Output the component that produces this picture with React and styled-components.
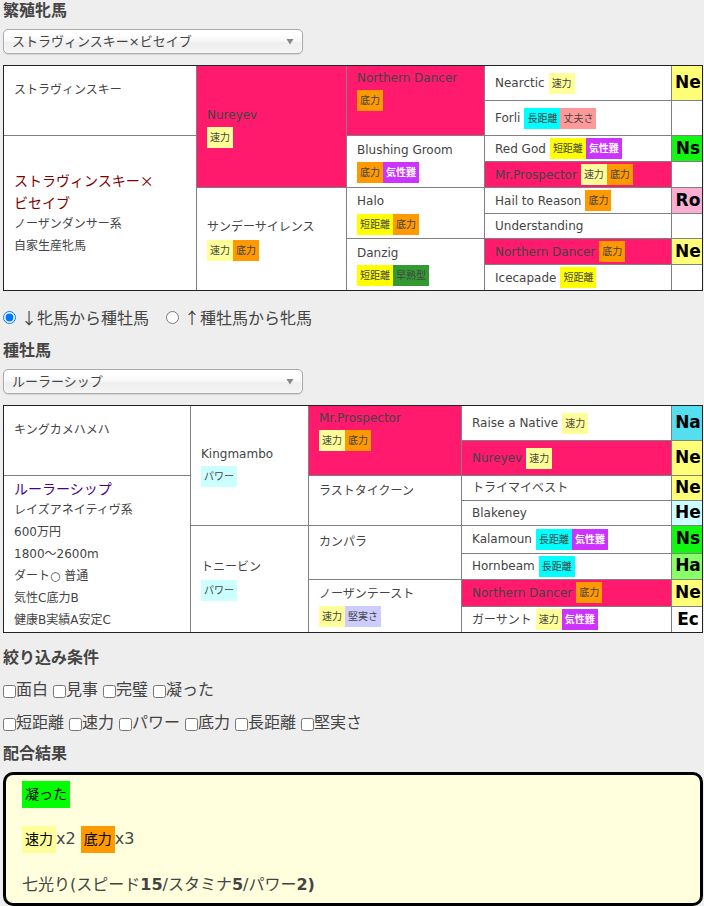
import React, { useState } from 'react';
import styled, { createGlobalStyle, css } from 'styled-components';

const GlobalStyle = createGlobalStyle`
  *, *::before, *::after {
    box-sizing: border-box;
  }
  body {
    margin: 0;
    background-color: #eee;
    color: #444;
    font-family: "DejaVu Sans", "Noto Sans CJK JP", sans-serif;
    font-size: 16px;
    line-height: 22px;
  }
`;

const Page = styled.main`
  padding: 0 1px 0 3px;
`;

const Heading = styled.h2`
  margin: 0 0 8px;
  font-size: 16px;
  font-weight: bold;
  line-height: 21px;
`;

const SelectBox = styled.div`
  position: relative;
  max-width: 300px;
  margin-bottom: 11px;
`;

const Select = styled.select`
  display: block;
  width: 100%;
  height: 25px;
  padding: 0 24px 0 8px;
  border: 1px solid #aaa;
  border-radius: 5px;
  background: linear-gradient(#fff 20%, #f6f6f6 50%, #eee 52%, #f4f4f4 100%);
  box-shadow: 0 0 3px #fff inset, 0 1px 1px rgba(0, 0, 0, 0.1);
  color: #444;
  font-family: inherit;
  font-size: 13px;
  appearance: none;
`;

const SelectArrow = styled.svg`
  position: absolute;
  top: 10px;
  right: 9px;
  pointer-events: none;
`;

const Table = styled.table`
  width: 100%;
  table-layout: fixed;
  border: 1px solid #222;
  border-collapse: separate;
  border-spacing: 0;
  background-color: #fff;
  font-size: 12px;

  tr:first-child > td {
    border-top: none;
  }
`;

const Cell = styled.td`
  padding: 0 0 0 10px;
  border-top: 1px solid #808080;
  border-left: 1px solid #808080;
  background-color: ${(props) => (props.$cross ? '#ff1a6e' : '#fff')};
  vertical-align: middle;
`;

const OwnCell = styled(Cell)`
  padding: 1px 0 1px 10px;
  border-left: none;
`;

const AncestorCell = styled(Cell)`
  height: ${(props) => props.$height}px;
`;

const CodeCell = styled(Cell)`
  padding: 0 0 2px 2px;
  background-color: ${(props) => props.$color || '#fff'};
  color: #000;
  font-size: 17px;
  font-weight: bold;
  text-align: center;
`;

const Line = styled.div`
  min-height: 22px;
`;

const TagLine = styled.div`
  display: flex;
  align-items: center;
  height: ${(props) => (props.$empty ? 20 : 24)}px;
`;

const NameLine = styled.div`
  display: flex;
  align-items: center;
  gap: 4px;
`;

const HorseLink = styled.a`
  color: ${(props) => props.$color};
  font-family: "Noto Sans CJK JP", sans-serif;
  font-size: 14px;
  text-decoration: none;
`;

const Tags = styled.span`
  display: flex;
`;

const Tag = styled.span`
  padding: 0 3px;
  background-color: ${(props) => props.$color};
  font-size: 10px;
  line-height: 21px;
  ${(props) =>
    props.$light &&
    css`
      color: #fff;
      font-weight: bold;
    `}
`;

const ResultTag = styled(Tag)`
  display: inline-block;
  color: #000;
  font-size: 14px;
  line-height: 27px;
`;

const RadioGroup = styled.div`
  display: flex;
  gap: 17px;
  margin: 15px 0 12px;
  font-family: "Noto Sans CJK JP", sans-serif;
`;

const RadioLabel = styled.label`
  display: flex;
  align-items: center;
  gap: 5px;

  input {
    width: 13px;
    height: 13px;
    margin: 0;
  }
`;

const FilterHeading = styled(Heading)`
  margin: 14px 0 11px;
`;

const Filters = styled.div`
  display: flex;
  flex-direction: column;
  gap: 11px;
  margin-bottom: 9px;
`;

const CheckRow = styled.div`
  display: flex;
  gap: 5px;
`;

const CheckLabel = styled.label`
  display: flex;
  align-items: center;

  input {
    width: 13px;
    height: 13px;
    margin: 2px 0 0;
  }
`;

const Result = styled.section`
  display: flex;
  flex-direction: column;
  gap: 18px;
  padding: 6px 16px 5px;
  border: 3px solid #000;
  border-radius: 10px;
  background-color: #ffffdd;
`;

const ResultLine = styled.div`
  display: flex;
  align-items: center;
  gap: 5px;
  height: 27px;
`;

const TAG_COLORS = {
  速力: '#ffff99',
  底力: '#ff9900',
  長距離: '#00ffff',
  短距離: '#ffff00',
  丈夫さ: '#ff9999',
  気性難: '#cc33ff',
  早熟型: '#339933',
  パワー: '#ccffff',
  堅実さ: '#ccccff',
  凝った: '#00ff00',
};

const CODE_COLORS = {
  Ne: '#ffff77',
  Ns: '#11f711',
  Ro: '#f9aed2',
  Na: '#55ddf0',
  He: '#ccffff',
  Ha: '#88ff66',
};

const mare = {
  widths: [192, 150, 138, 187, 31],
  sire: 'ストラヴィンスキー',
  own: {
    name: ['ストラヴィンスキー×', 'ビセイブ'],
    color: '#800000',
    lines: ['ノーザンダンサー系', '自家生産牝馬'],
  },
  second: [
    { name: 'Nureyev', tags: ['速力'], cross: true },
    { name: 'サンデーサイレンス', tags: ['速力', '底力'] },
  ],
  third: [
    { name: 'Northern Dancer', tags: ['底力'], cross: true },
    { name: 'Blushing Groom', tags: ['底力', '気性難'] },
    { name: 'Halo', tags: ['短距離', '底力'] },
    { name: 'Danzig', tags: ['短距離', '早熟型'] },
  ],
  fourth: [
    { name: 'Nearctic', tags: ['速力'], code: 'Ne' },
    { name: 'Forli', tags: ['長距離', '丈夫さ'] },
    { name: 'Red God', tags: ['短距離', '気性難'], code: 'Ns' },
    { name: 'Mr.Prospector', tags: ['速力', '底力'], cross: true },
    { name: 'Hail to Reason', tags: ['底力'], code: 'Ro' },
    { name: 'Understanding', tags: [] },
    { name: 'Northern Dancer', tags: ['底力'], cross: true, code: 'Ne' },
    { name: 'Icecapade', tags: ['短距離'] },
  ],
};

const stallion = {
  widths: [186, 118, 153, 210, 31],
  sire: 'キングカメハメハ',
  own: {
    name: ['ルーラーシップ'],
    color: '#4b0082',
    lines: [
      'レイズアネイティヴ系',
      '600万円',
      '1800〜2600m',
      'ダート○ 普通',
      '気性C底力B',
      '健康B実績A安定C',
    ],
  },
  second: [
    { name: 'Kingmambo', tags: ['パワー'] },
    { name: 'トニービン', tags: ['パワー'] },
  ],
  third: [
    { name: 'Mr.Prospector', tags: ['速力', '底力'], cross: true },
    { name: 'ラストタイクーン', tags: [] },
    { name: 'カンパラ', tags: [] },
    { name: 'ノーザンテースト', tags: ['速力', '堅実さ'] },
  ],
  fourth: [
    { name: 'Raise a Native', tags: ['速力'], code: 'Na' },
    { name: 'Nureyev', tags: ['速力'], cross: true, code: 'Ne' },
    { name: 'トライマイベスト', tags: [], code: 'Ne' },
    { name: 'Blakeney', tags: [], code: 'He' },
    { name: 'Kalamoun', tags: ['長距離', '気性難'], code: 'Ns' },
    { name: 'Hornbeam', tags: ['長距離'], code: 'Ha' },
    { name: 'Northern Dancer', tags: ['底力'], cross: true, code: 'Ne' },
    { name: 'ガーサント', tags: ['速力', '気性難'], code: 'Ec' },
  ],
};

const TagList = ({ tags }) => (
  <Tags>
    {tags.map((tag) => (
      <Tag key={tag} $color={TAG_COLORS[tag]} $light={tag === '気性難'}>
        {tag}
      </Tag>
    ))}
  </Tags>
);

const rowHeight = (index, tags) => {
  if (index === 0) return 34;
  if (index === 1) return 35;
  return tags.length ? 26 : 25;
};

const Pedigree = ({ horse }) => {
  const { widths, sire, own, second, third, fourth } = horse;

  return (
    <Table>
      <colgroup>
        {widths.map((width, i) => (
          <col key={i} width={width} />
        ))}
      </colgroup>
      <tbody>
        {fourth.map((horse4, i) => {
          const horse2 = second[i / 4];
          const horse3 = third[i / 2];
          return (
            <tr key={horse4.name}>
              {i === 0 && (
                <OwnCell rowSpan={2}>
                  <Line>{sire}</Line>
                  <Line />
                </OwnCell>
              )}
              {i === 2 && (
                <OwnCell rowSpan={6}>
                  <HorseLink href="#horse" $color={own.color}>
                    {own.name.map((part) => (
                      <Line key={part}>{part}</Line>
                    ))}
                  </HorseLink>
                  {own.lines.map((line) => (
                    <Line key={line}>{line}</Line>
                  ))}
                </OwnCell>
              )}
              {horse2 && (
                <Cell rowSpan={4} $cross={horse2.cross}>
                  <Line>{horse2.name}</Line>
                  <TagLine>
                    <TagList tags={horse2.tags} />
                  </TagLine>
                </Cell>
              )}
              {horse3 && (
                <Cell rowSpan={2} $cross={horse3.cross}>
                  <Line>{horse3.name}</Line>
                  <TagLine $empty={!horse3.tags.length}>
                    <TagList tags={horse3.tags} />
                  </TagLine>
                  {i === 0 && <Line />}
                </Cell>
              )}
              <AncestorCell $cross={horse4.cross} $height={rowHeight(i, horse4.tags)}>
                <NameLine>
                  {horse4.name}
                  <TagList tags={horse4.tags} />
                </NameLine>
              </AncestorCell>
              <CodeCell $color={CODE_COLORS[horse4.code]}>{horse4.code}</CodeCell>
            </tr>
          );
        })}
      </tbody>
    </Table>
  );
};

const HorseSelect = ({ label, name }) => (
  <SelectBox>
    <Select aria-label={label} defaultValue={name}>
      <option value={name}>{name}</option>
    </Select>
    <SelectArrow width="8" height="6" viewBox="0 0 8 6" aria-hidden="true">
      <path d="M0.5 0h7L4 5.5z" fill="#888" />
    </SelectArrow>
  </SelectBox>
);

const FilterRow = ({ names }) => (
  <CheckRow>
    {names.map((name) => (
      <CheckLabel key={name}>
        <input type="checkbox" name={name} />
        {name}
      </CheckLabel>
    ))}
  </CheckRow>
);

const App = () => {
  const [direction, setDirection] = useState('mare');

  return (
    <Page lang="ja">
      <GlobalStyle />
      <Heading>繁殖牝馬</Heading>
      <HorseSelect label="繁殖牝馬" name="ストラヴィンスキー×ビセイブ" />
      <Pedigree horse={mare} />

      <RadioGroup>
        <RadioLabel>
          <input
            type="radio"
            name="direction"
            checked={direction === 'mare'}
            onChange={() => setDirection('mare')}
          />
          ↓牝馬から種牡馬
        </RadioLabel>
        <RadioLabel>
          <input
            type="radio"
            name="direction"
            checked={direction === 'stallion'}
            onChange={() => setDirection('stallion')}
          />
          ↑種牡馬から牝馬
        </RadioLabel>
      </RadioGroup>

      <Heading>種牡馬</Heading>
      <HorseSelect label="種牡馬" name="ルーラーシップ" />
      <Pedigree horse={stallion} />

      <FilterHeading>絞り込み条件</FilterHeading>
      <Filters>
        <FilterRow names={['面白', '見事', '完璧', '凝った']} />
        <FilterRow names={['短距離', '速力', 'パワー', '底力', '長距離', '堅実さ']} />
      </Filters>

      <Heading>配合結果</Heading>
      <Result>
        <ResultLine>
          <ResultTag $color={TAG_COLORS['凝った']}>凝った</ResultTag>
        </ResultLine>
        <ResultLine>
          <span>
            <ResultTag $color={TAG_COLORS['速力']}>速力</ResultTag>x2
          </span>
          <span>
            <ResultTag $color={TAG_COLORS['底力']}>底力</ResultTag>x3
          </span>
        </ResultLine>
        <ResultLine>
          <span>
            七光り(スピード<b>15</b>/スタミナ<b>5</b>/パワー<b>2)</b>
          </span>
        </ResultLine>
      </Result>
    </Page>
  );
};

export default App;
